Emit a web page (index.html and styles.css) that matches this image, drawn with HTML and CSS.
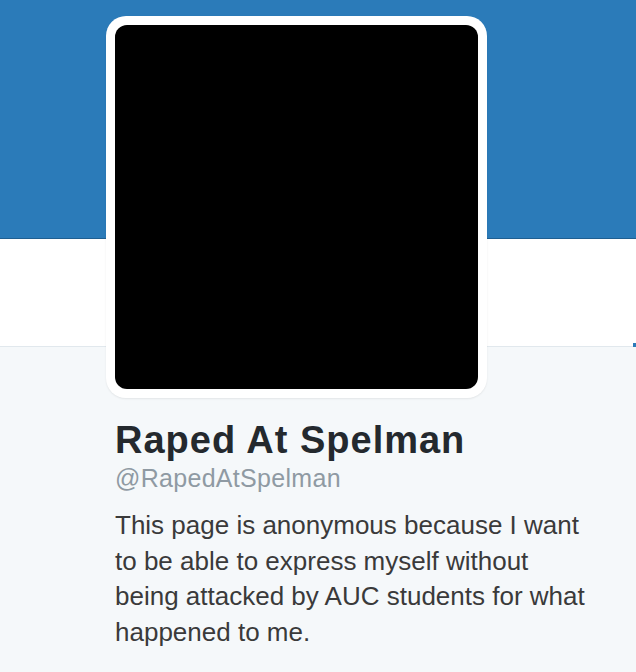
FILE: index.html
```html
<!DOCTYPE html>
<html>
<head>
<title>Raped At Spelman</title>
<link rel="stylesheet" href="styles.css">
</head>
<body>

<div class="banner"></div>
<div class="nav-band">
 <span class="nav-mark"></span>
</div>

<div class="avatar">
 <div class="avatar-img"></div>
</div>

<div class="profile">
 <h1 class="name">Raped At Spelman</h1>
 <p class="handle">@RapedAtSpelman</p>
 <p class="bio">This page is anonymous because I want to be able to express myself without being attacked by AUC students for what happened to me.</p>
</div>

</body>
</html>
```

FILE: styles.css
```css
body {
 margin: 0;
 font-family: "Liberation Sans", Arial, sans-serif;
 background-color: #f5f8fa;
 position: relative;
}
.banner {
 height: 238px;
 background-color: #2b7bb9;
 border-bottom: 1px solid #1f5f91;
}
.nav-band {
 height: 107px;
 background-color: #fff;
 border-bottom: 1px solid #e1e8ed;
 position: relative;
}
.nav-mark {
 position: absolute;
 right: 0;
 bottom: -1px;
 width: 3px;
 height: 4px;
 background-color: #2b7bb9;
}

/* avatar lies over the banner */
.avatar {
 position: absolute;
 left: 106px;
 top: 16px;
 width: 363px;
 height: 364px;
 padding: 9px;
 background-color: #fff;
 border-radius: 20px;
 box-shadow: 0 1px 2px rgba(0, 0, 0, 0.08);
}
.avatar-img {
 width: 100%;
 height: 100%;
 background-color: #000;
 border-radius: 12px;
}

.profile {
 padding: 71px 0 0 115px;
}
.name {
 margin: 0;
 font-size: 38px;
 line-height: 44px;
 letter-spacing: 1px;
 color: #24292e;
}
.handle {
 margin: 2px 0 0;
 font-size: 25px;
 line-height: 28px;
 letter-spacing: 0.3px;
 color: #8f9aa3;
}
.bio {
 margin: 16px 0 0;
 width: 478px;
 font-size: 26px;
 line-height: 35.7px;
 color: #3a3a3a;
}
```
